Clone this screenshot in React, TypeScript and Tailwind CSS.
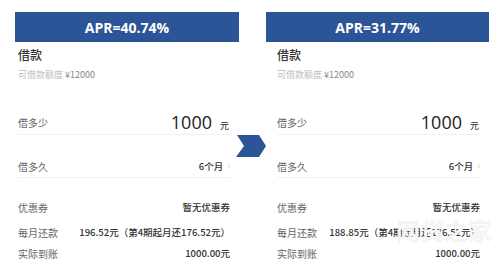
import React from "react";

type P = {
  apr: string;
  monthly: string;
  headerCls: string;
  contentCls: string;
};

function Panel({ apr, monthly, headerCls, contentCls }: P) {
  return (
    <div className="flex flex-col">
      <div
        className={`${headerCls} h-[30px] bg-[#2b5597] flex items-center justify-center text-white font-bold text-[14px]`}
        style={{ fontFamily: '"Open Sans", "Noto Sans", sans-serif' }}
      >
        {apr}
      </div>
      <div className={`${contentCls} flex flex-col`}>
        <div className="mt-[4px] h-[18px] leading-[18px] text-[12px] font-medium text-[#333]">借款</div>
        <div className="mt-[4px] h-[14px] leading-[14px] text-[9px] text-[#bdbdbd]">
          可借款额度 <span className="text-[#888]">¥12000</span>
        </div>
        <div className="mt-[28px] h-[25px] flex items-center justify-between border-b border-[#f1f1f1]">
          <span className="text-[10px] text-[#666]">借多少</span>
          <span className="flex items-baseline text-[#222]">
            <span className="text-[18px] leading-[24px]" style={{ fontFamily: '"Open Sans", sans-serif' }}>1000</span>
            <span className="ml-[8px] text-[9px] mr-[1px]">元</span>
          </span>
        </div>
        <div className="pt-[20px] h-[43px] flex items-center justify-between border-b border-[#f1f1f1]">
          <span className="text-[10px] text-[#666]">借多久</span>
          <span className="flex items-center text-[9.5px] font-medium text-[#333]">
            6个月<span className="ml-[4px] text-[#ccc] text-[9px]">›</span>
          </span>
        </div>
        <div className="mt-[19px] h-[20px] flex items-center justify-between text-[10px]">
          <span className="text-[#666]">优惠券</span>
          <span className="text-[#333] text-[9.5px] font-medium">暂无优惠券</span>
        </div>
        <div className="mt-[5px] h-[20px] flex items-center justify-between text-[10px]">
          <span className="text-[#666]">每月还款</span>
          <span className="text-[#333] text-[9.5px] font-medium whitespace-nowrap">{monthly}</span>
        </div>
        <div className="mt-[1px] h-[20px] flex items-center justify-between text-[10px]">
          <span className="text-[#666]">实际到账</span>
          <span className="text-[#333] text-[9.5px] font-medium">1000.00元</span>
        </div>
      </div>
    </div>
  );
}

export default function App() {
  return (
    <div
      className="relative w-[500px] h-[263px] bg-white overflow-hidden"
      style={{ fontFamily: '"Noto Sans CJK SC", "Noto Sans", sans-serif' }}
    >
      <div className="flex pt-[12px]">
        <div className="ml-[15px] w-[224px]">
          <Panel
            apr="APR=40.74%"
            monthly="196.52元（第4期起月还176.52元）"
            headerCls="w-[224px]"
            contentCls="pl-[3px] pr-[9px]"
          />
        </div>
        <div className="ml-[27px] w-[223px]">
          <Panel
            apr="APR=31.77%"
            monthly="188.85元（第4期起月还176.52元）"
            headerCls="w-[223px]"
            contentCls="pl-[11px] pr-[9px]"
          />
        </div>
      </div>
      <svg className="absolute left-[235px] top-[135px]" width="31" height="22" viewBox="0 0 31 22">
        <polygon points="2,0 24,0 31,11 24,22 1,22 9,11" fill="#2b5597" />
      </svg>
      <div className="absolute left-[396px] top-[218px] whitespace-nowrap text-[24px] font-bold text-[#f4f4f4] leading-none pointer-events-none">
        网贷之家
      </div>
    </div>
  );
}
